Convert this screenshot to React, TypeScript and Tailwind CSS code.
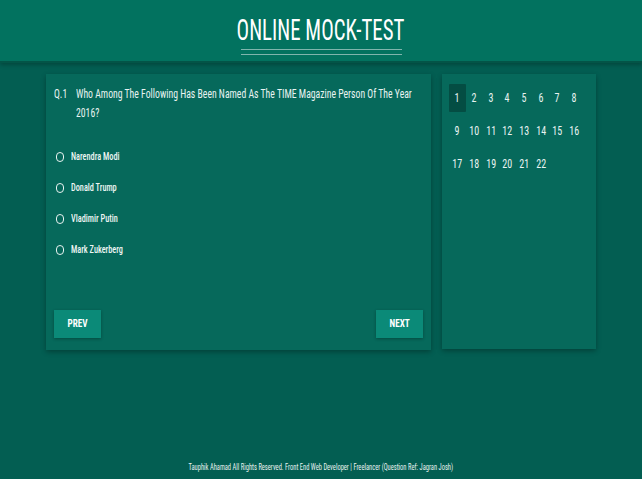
import React from "react";

const options = ["Narendra Modi", "Donald Trump", "Vladimir Putin", "Mark Zukerberg"];
const numbers = Array.from({ length: 22 }, (_, i) => i + 1);

const App = () => {
  return (
    <div className="min-h-[479px] bg-[#035e52] text-white font-['Roboto',sans-serif] font-stretch-condensed flex flex-col overflow-hidden">
      <header className="h-[63px] bg-[#02725f] border-b-2 border-[#035447] shadow-[0_2px_4px_rgba(0,0,0,0.25)] flex flex-col items-center pt-[15px]">
        <h1 className="text-[29px] leading-[31px] text-white whitespace-nowrap scale-x-[0.72]">ONLINE MOCK-TEST</h1>
        <div className="w-[161px] mt-[3px] border-t border-b border-[#7fb5ad] h-[6px]" />
      </header>

      <main className="flex justify-center gap-[11px] mt-[11px]">
        <section className="w-[385px] h-[276px] bg-[#06695b] shadow-[0_2px_5px_rgba(0,0,0,0.3)] flex flex-col px-[8px] pt-[10px] pb-[12px]">
          <div className="flex text-[13.5px] leading-[19px] text-[#e8f3f1]">
            <span className="w-[22px] shrink-0 origin-left scale-x-[0.72]">Q.1</span>
            <div className="w-[347px] shrink-0">
              <p className="w-[470px] origin-left scale-x-[0.72]">
                Who Among The Following Has Been Named As The TIME Magazine Person Of The Year 2016?
              </p>
            </div>
          </div>
          <ul className="mt-[26px] flex flex-col gap-[14px]">
            {options.map((o) => (
              <li key={o} className="flex items-center h-[17px] text-[11.5px] font-medium text-[#eef6f4]">
                <span className="w-[8px] h-[10px] ml-[2px] mr-[7px] rounded-full border-[1.5px] border-[#e8f3f1]" />
                <span className="whitespace-nowrap origin-left scale-x-[0.72]">{o}</span>
              </li>
            ))}
          </ul>
          <div className="mt-auto flex justify-between">
            <button className="w-[47px] h-[28px] bg-[#0b8a78] shadow-[0_1px_3px_rgba(0,0,0,0.3)] text-[11.5px] font-bold">
              <span className="inline-block scale-x-[0.8]">PREV</span>
            </button>
            <button className="w-[47px] h-[28px] bg-[#0b8a78] shadow-[0_1px_3px_rgba(0,0,0,0.3)] text-[11.5px] font-bold">
              <span className="inline-block scale-x-[0.8]">NEXT</span>
            </button>
          </div>
        </section>

        <aside className="w-[154px] h-[275px] bg-[#06695b] shadow-[0_2px_5px_rgba(0,0,0,0.3)] px-[7px] pt-[10px]">
          <div className="grid grid-cols-[repeat(8,16.7px)] gap-y-[5px]">
            {numbers.map((n) => (
              <span
                key={n}
                className={
                  n === 1
                    ? "h-[28px] flex items-center justify-center text-[12.5px] text-[#e8f3f1] bg-[#044d43] rounded-[1px]"
                    : "h-[28px] flex items-center justify-center text-[12.5px] text-[#e8f3f1]"
                }
              >
                <span className="inline-block scale-x-[0.8]">{n}</span>
              </span>
            ))}
          </div>
        </aside>
      </main>

      <footer className="mt-auto pb-[5px] flex justify-center text-[9px] text-[#e8f3f1]">
        <span className="whitespace-nowrap scale-x-[0.72]">
          Tauphik Ahamad All Rights Reserved. Front End Web Developer | Freelancer (Question Ref: Jagran Josh)
        </span>
      </footer>
    </div>
  );
};

export default App;
